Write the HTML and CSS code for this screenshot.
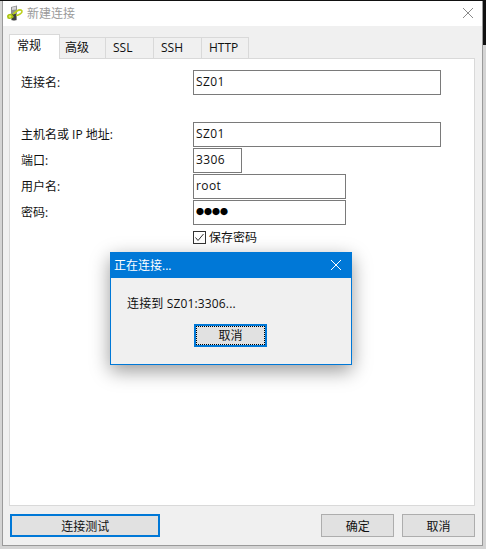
FILE: index.html
```html
<!DOCTYPE html>
<html lang="zh-CN">
<head>
    <meta charset="UTF-8">
    <meta name="viewport" content="width=device-width, initial-scale=1.0">
    <title>新建连接</title>
    <link rel="stylesheet" href="styles.css">
</head>
<body>

<div class="backdrop">
    <div class="window">
        <div class="titlebar">
            <svg class="app-icon" width="18" height="17" viewBox="0 0 18 17">
                <path d="M5 2 L11 0.5 V15 L8 16 L5 15 Z" fill="#8f8f8f"/>
                <path d="M6 2.5 L10 1.5 V4.5 L6 5 Z" fill="#d6d6d6"/>
                <path d="M6 9 H10 V15 H6 Z" fill="#3f3f3f"/>
                <path d="M1 11 C1.5 9 4 8.5 6 9 L8 12 C6 14 3 14.5 1.5 13.5 Z" fill="#a8c010"/>
                <path d="M7 9 L11 6 C13 4.5 15.5 4.5 16 6 C16.5 8 13 10 10 10.5" stroke="#bcd01a" stroke-width="1.6" fill="none"/>
                <circle cx="4" cy="11.5" r="1.3" fill="#e4ee60"/>
            </svg>
            <span class="window-title">新建连接</span>
            <svg class="close-icon" width="12" height="12" viewBox="0 0 12 12">
                <path d="M1 1 L11 11 M11 1 L1 11" stroke="#8a8a8a" stroke-width="1" fill="none"/>
            </svg>
        </div>

        <div class="content">
            <div class="tabs">
                <div class="tab active">常规</div>
                <div class="tab tab-cjk">高级</div>
                <div class="tab">SSL</div>
                <div class="tab">SSH</div>
                <div class="tab tab-last">HTTP</div>
            </div>

            <div class="panel">
                <div class="row row-name">
                    <label>连接名:</label>
                    <div class="field field-wide">SZ01</div>
                </div>
                <div class="row">
                    <label>主机名或 IP 地址:</label>
                    <div class="field field-wide">SZ01</div>
                </div>
                <div class="row">
                    <label>端口:</label>
                    <div class="field field-port">3306</div>
                </div>
                <div class="row">
                    <label>用户名:</label>
                    <div class="field field-mid">root</div>
                </div>
                <div class="row">
                    <label>密码:</label>
                    <div class="field field-mid field-password">●●●●</div>
                </div>
                <div class="row row-check">
                    <svg class="checkbox" width="13" height="13" viewBox="0 0 13 13">
                        <rect x="0.5" y="0.5" width="12" height="12" fill="#fff" stroke="#333"/>
                        <path d="M2.5 6.5 L5 9.5 L10.5 3" stroke="#333" stroke-width="1" fill="none"/>
                    </svg>
                    <span>保存密码</span>
                </div>
            </div>

            <div class="footer">
                <button class="btn btn-test">连接测试</button>
                <button class="btn btn-ok">确定</button>
                <button class="btn btn-cancel">取消</button>
            </div>
        </div>

        <div class="dialog">
            <div class="dialog-title">
                <span>正在连接...</span>
                <svg width="12" height="12" viewBox="0 0 12 12">
                    <path d="M1 1 L11 11 M11 1 L1 11" stroke="#fff" stroke-width="1" fill="none"/>
                </svg>
            </div>
            <div class="dialog-body">
                <div class="dialog-text">连接到 SZ01:3306...</div>
                <button class="btn-dialog"><span>取消</span></button>
            </div>
        </div>
    </div>
</div>

</body>
</html>
```

FILE: styles.css
```css
html, body {
    margin: 0;
    padding: 0;
}
body {
    width: 486px;
    height: 549px;
    overflow: hidden;
    font-family: "Open Sans", "Noto Sans CJK SC", sans-serif;
    font-size: 12px;
    color: #111;
}
.backdrop {
    height: 549px;
    padding: 1px 3px 3px 2px;
    box-sizing: border-box;
    background:
        linear-gradient(#111, #111) right top / 3px 45px no-repeat,
        linear-gradient(#111, #111) left top / 100% 1px no-repeat,
        #d4d4d4;
}
.window {
    position: relative;
    height: 545px;
    box-sizing: border-box;
    background: #f0f0f0;
    border: 1px solid #9a9a9a;
    border-top: none;
}
.titlebar {
    display: flex;
    align-items: center;
    height: 24px;
    background: #fff;
    padding: 0 8px 1px 3px;
}
.app-icon {
    margin-right: 3px;
}
.window-title {
    flex: 1;
    color: #9a9a9a;
}
.content {
    padding: 9px 7px 0 6px;
}
.tabs {
    display: flex;
    height: 24px;
    align-items: flex-end;
}
.tab {
    width: 48px;
    height: 22px;
    line-height: 19px;
    box-sizing: border-box;
    padding-left: 7px;
    background: #f0f0f0;
    border: 1px solid #d9d9d9;
    border-left: none;
}
.tab.active {
    width: 51px;
    height: 25px;
    line-height: 22px;
    background: #fff;
    border-left: 1px solid #d9d9d9;
    border-bottom: none;
    position: relative;
    z-index: 1;
}
.tab-cjk {
    width: 46px;
    padding-left: 5px;
}
.tab-last {
    width: 47px;
}
.panel {
    height: 448px;
    box-sizing: border-box;
    margin-top: -1px;
    padding: 10px 0 0 11px;
    background: #fff;
    border: 1px solid #d9d9d9;
}
.row {
    display: flex;
    align-items: center;
    height: 26px;
}
.row label {
    width: 172px;
    flex: none;
}
.row-name {
    margin-bottom: 26px;
}
.field {
    height: 25px;
    line-height: 22px;
    box-sizing: border-box;
    padding-left: 2px;
    letter-spacing: 0.4px;
    border: 1px solid #7a7a7a;
    background: #fff;
}
.field-wide {
    width: 248px;
}
.field-port {
    width: 49px;
}
.field-mid {
    width: 153px;
}
.field-password {
    font-family: "Noto Sans CJK SC", sans-serif;
    font-size: 8px;
    letter-spacing: 0;
    color: #000;
}
.row-check {
    padding-left: 172px;
    gap: 3px;
    height: 24px;
}
.footer {
    display: flex;
    margin-top: 8px;
    margin-left: 1px;
}
.btn {
    height: 23px;
    box-sizing: border-box;
    background: #e1e1e1;
    border: 1px solid #adadad;
    font: inherit;
    color: inherit;
    padding: 0;
}
.btn-test {
    width: 151px;
    border: 2px solid #0078d7;
    margin-right: 161px;
}
.btn-ok {
    width: 73px;
    margin-right: 8px;
}
.btn-cancel {
    width: 73px;
}
.dialog {
    position: absolute;
    left: 107px;
    top: 251px;
    width: 242px;
    height: 113px;
    box-sizing: border-box;
    background: #f0f0f0;
    border: 1px solid #0078d7;
    box-shadow: 0 6px 18px rgba(0, 0, 0, 0.4);
}
.dialog-title {
    display: flex;
    align-items: center;
    justify-content: space-between;
    height: 24px;
    padding: 0 9px 1px 3px;
    background: #0078d7;
    color: #fff;
}
.dialog-body {
    display: flex;
    flex-direction: column;
    align-items: center;
    padding-right: 1px;
}
.dialog-text {
    align-self: flex-start;
    margin: 17px 0 0 16px;
    line-height: 18px;
    letter-spacing: 0.15px;
}
.btn-dialog {
    width: 73px;
    height: 23px;
    margin-top: 11px;
    box-sizing: border-box;
    padding: 0;
    border: 2px solid #0078d7;
    background: #e1e1e1;
    font: inherit;
    color: inherit;
}
.btn-dialog span {
    display: block;
    height: 19px;
    line-height: 17px;
    box-sizing: border-box;
    border: 1px dotted #000;
}
```
